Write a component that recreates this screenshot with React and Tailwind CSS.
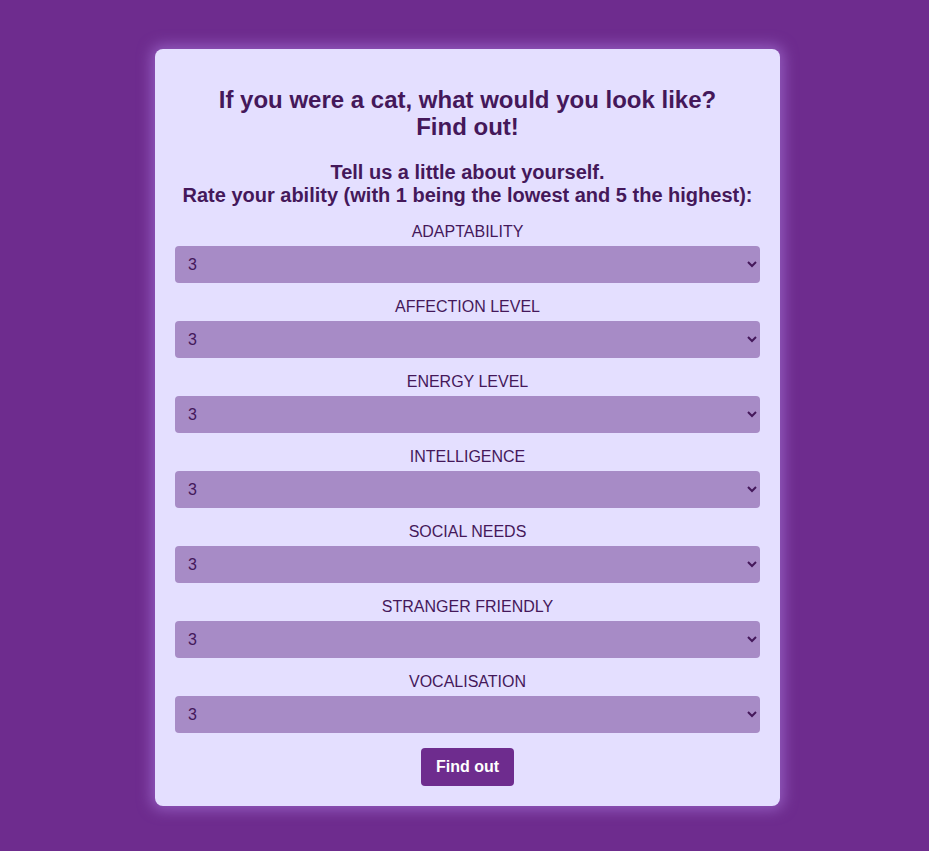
import { useState } from 'react'

const traits = [
  'Adaptability',
  'Affection level',
  'Energy level',
  'Intelligence',
  'Social needs',
  'Stranger friendly',
  'Vocalisation',
]

export default function App() {
  const [values, setValues] = useState(() => Object.fromEntries(traits.map((t) => [t, '3'])))

  return (
    <div className="min-h-screen bg-[#6e2c8e] pt-[49px] pb-10 pl-[6px] font-['Liberation_Sans',Arial,sans-serif] text-[#44185a]">
      <form
        className="mx-auto w-[625px] rounded-lg bg-[#e4dfff] px-5 pt-[37px] pb-5 flex flex-col items-center shadow-[0_0_14px_4px_rgba(170,120,220,0.6)]"
        onSubmit={(e) => e.preventDefault()}
      >
        <h1 className="text-center text-[24px] font-bold leading-[27px]">
          If you were a cat, what would you look like?
          <br />
          Find out!
        </h1>
        <h2 className="mt-[21px] text-center text-[20px] font-bold leading-[23px]">
          Tell us a little about yourself.
          <br />
          Rate your ability (with 1 being the lowest and 5 the highest):
        </h2>

        <div className="mt-[16px] w-full flex flex-col gap-[15px]">
          {traits.map((t) => (
            <div key={t} className="flex flex-col items-center gap-[5px]">
              <label className="text-[16px] leading-[18px] uppercase">{t}</label>
              <select
                value={values[t]}
                onChange={(e) => setValues((v) => ({ ...v, [t]: e.target.value }))}
                className="w-full h-[37px] rounded bg-[#a78bc6] border-0 pl-[9px] pr-2 text-[16px] text-[#44185a] outline-none"
              >
                {[1, 2, 3, 4, 5].map((n) => (
                  <option key={n} value={n}>{n}</option>
                ))}
              </select>
            </div>
          ))}
        </div>

        <button
          type="submit"
          className="mt-[15px] h-[38px] w-[93px] rounded bg-[#6e2c8e] text-[16px] font-bold text-white"
        >
          Find out
        </button>
      </form>
    </div>
  )
}
